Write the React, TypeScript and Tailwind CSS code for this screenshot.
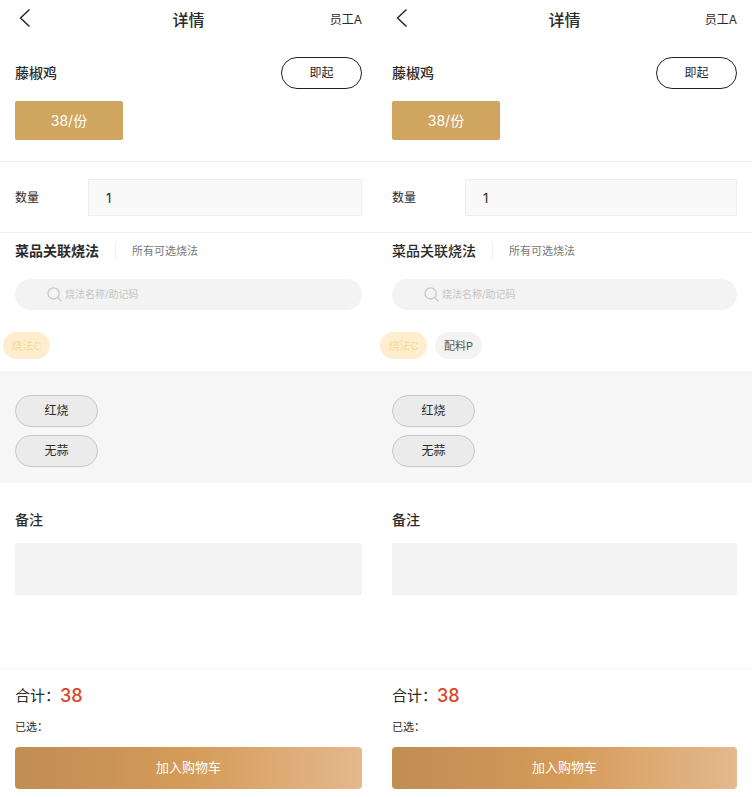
import React from "react";

interface Chip {
  name: string;
  active: boolean;
}

interface DishDetailProps {
  id: string;
  chips: Chip[];
  boldTab?: boolean;
}

const remarks = ["红烧", "无蒜"];

const BackIcon = () => (
  <svg width="12" height="20" viewBox="0 0 12 20" fill="none">
    <path d="M10.5 1.5L1.5 10L10.5 18.5" stroke="#222" strokeWidth="1.4" />
  </svg>
);

const SearchIcon = () => (
  <svg width="16" height="16" viewBox="0 0 16 16" fill="none">
    <circle cx="6.6" cy="6.4" r="5.6" stroke="#c8c8c8" strokeWidth="1.3" />
    <path d="M10.6 10.4L14.4 14.2" stroke="#c8c8c8" strokeWidth="1.3" />
  </svg>
);

const DishDetail: React.FC<DishDetailProps> = ({
  id,
  chips,
  boldTab = false,
}) => {
  return (
    <section className="flex flex-col">
      <header className="grid grid-cols-3 items-center h-10 px-[15px]">
        <button aria-label="返回" className="justify-self-start pl-1 pb-1">
          <BackIcon />
        </button>
        <h1 className="justify-self-center text-base leading-6 font-medium">
          详情
        </h1>
        <span className="justify-self-end text-xs">员工A</span>
      </header>

      <div className="px-[15px] pt-[17px] pb-[21px] border-b border-[#ececec]">
        <div className="flex items-center justify-between">
          <h2 className="text-sm font-medium">藤椒鸡</h2>
          <button className="w-[81px] h-8 rounded-full border border-[#222] text-xs">
            即起
          </button>
        </div>
        <button className="mt-3 w-[108px] h-[39px] rounded-xs bg-[#cfa560] text-white text-sm">
          38/份
        </button>
      </div>

      <div className="flex items-center px-[15px] pt-[17px] pb-4 border-b border-[#ececec]">
        <label htmlFor={`${id}-count`} className="w-[73px] text-xs">
          数量
        </label>
        <input
          id={`${id}-count`}
          defaultValue="1"
          className="flex-1 min-w-0 h-[37px] px-[17px] bg-[#f9f9f9] border border-[#eee] text-[13px]"
        />
      </div>

      <div className="flex items-center px-[15px] h-9">
        <button
          className={`text-sm ${boldTab ? "font-bold" : "font-medium"}`}
        >
          菜品关联烧法
        </button>
        <span className="w-px h-4 mx-4 bg-[#eee]"></span>
        <button className="text-[11px] text-[#777]">所有可选烧法</button>
      </div>

      <div className="px-[15px] pt-2.5">
        <label className="flex items-center gap-0.5 h-[31px] pl-8 pr-4 rounded-full bg-[#f3f3f3]">
          <SearchIcon />
          <input
            aria-label="烧法名称/助记码"
            placeholder="烧法名称/助记码"
            className="flex-1 min-w-0 text-[10px] placeholder:text-[#c4c4c4]"
          />
        </label>
      </div>

      <div className="flex gap-2 px-[3px] pt-[22px] pb-3">
        {chips.map((chip) => (
          <button
            key={chip.name}
            className={`w-[47px] h-[27px] pt-0.5 rounded-full text-[11px] ${
              chip.active
                ? "bg-[#ffedd0] text-[#f7d996]"
                : "bg-[#f3f3f3] text-[#555]"
            }`}
          >
            {chip.name}
          </button>
        ))}
      </div>

      <div className="flex flex-col items-start gap-2 px-[15px] pt-6 pb-4 bg-[#f6f6f6]">
        {remarks.map((remark) => (
          <button
            key={remark}
            className="w-[83px] h-8 rounded-full border border-[#c8c8c8] bg-[#ebebeb] text-xs"
          >
            {remark}
          </button>
        ))}
      </div>

      <div className="px-[15px] pt-[27px] pb-[73px] border-b border-[#f5f5f5]">
        <label htmlFor={`${id}-note`} className="block text-sm font-medium">
          备注
        </label>
        <textarea
          id={`${id}-note`}
          className="block w-full h-[52px] mt-[13px] p-2 rounded-xs bg-[#f3f3f3] text-xs resize-none"
        />
      </div>

      <footer className="px-[15px] pt-[15px] pb-2">
        <p className="flex items-center h-6 text-[15px]">
          合计：
          <span className="text-lg font-medium text-[#dc4527]">38</span>
        </p>
        <p className="mt-[11px] text-[11px] leading-4">已选：</p>
        <button className="mt-3 w-full h-[42px] rounded bg-linear-to-r from-[#c08d54] via-[#d59b58] to-[#e4b98d] text-white text-[13px]">
          加入购物车
        </button>
      </footer>
    </section>
  );
};

export default function App() {
  return (
    <main className="grid grid-cols-[377fr_375fr] bg-white text-[#2a2a2a] font-['Inter','Noto_Sans_CJK_SC',sans-serif]">
      <DishDetail
        id="first"
        boldTab
        chips={[{ name: "烧法C", active: true }]}
      />
      <DishDetail
        id="second"
        chips={[
          { name: "烧法C", active: true },
          { name: "配料P", active: false },
        ]}
      />
    </main>
  );
}
